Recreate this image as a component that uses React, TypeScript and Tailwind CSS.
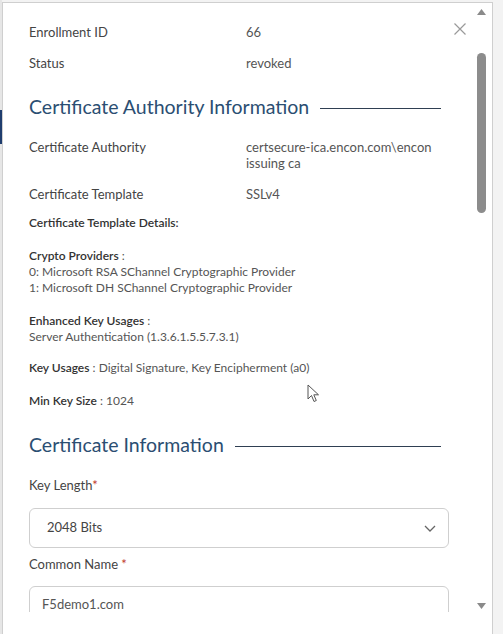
import React from 'react';

const font = { fontFamily: 'Lato, "Open Sans", sans-serif' };

const Row = ({ label, children, className = '' }: { label: string; children: React.ReactNode; className?: string }) => (
  <div className={`flex text-[13px] leading-[16px] ${className}`}>
    <div className="w-[217px] shrink-0 text-[#444]">{label}</div>
    <div className="text-[#555]">{children}</div>
  </div>
);

const Heading = ({ title, className = '' }: { title: string; className?: string }) => (
  <div className={`flex items-center gap-[11px] w-[412px] ${className}`}>
    <h2 className="text-[19.5px] leading-[28px] text-[#2b4e72] whitespace-nowrap">{title}</h2>
    <div className="flex-1 h-[1.5px] bg-[#2f3f52] mt-[3px]" />
  </div>
);

const Detail = ({ label, children, className = '' }: { label: string; children?: React.ReactNode; className?: string }) => (
  <div className={`text-[12px] leading-[16px] text-[#555] ${className}`}>
    <span className="font-semibold text-[#333]">{label}</span>
    {children}
  </div>
);

export default function App() {
  return (
    <div className="w-[503px] h-[634px] bg-[#f3f3f3] flex overflow-hidden" style={font}>
      <div className="w-[2px] shrink-0 flex flex-col">
        <div className="h-[110px] bg-[#e6e6e6]" />
        <div className="h-[34px] bg-[#1f3d6e]" />
        <div className="flex-1 bg-[#e6e6e6]" />
      </div>
      <div className="w-[491px] shrink-0 bg-white border-l border-t border-r border-[#cfcfcf] mt-[2px] flex relative">
        <button className="absolute left-[450px] top-[19px] text-[#9a9a9a]">
          <svg width="14" height="14" viewBox="0 0 14 14" fill="none" stroke="currentColor" strokeWidth="1.2">
            <path d="M1.5 1.5 L12.5 12.5 M12.5 1.5 L1.5 12.5" />
          </svg>
        </button>
        <div className="flex-1 h-[609px] overflow-hidden pl-[26px] pt-[19px] relative">
          <Row label="Enrollment ID" className="leading-[20px]">66</Row>
          <Row label="Status" className="mt-[11px] leading-[20px]">revoked</Row>

          <Heading title="Certificate Authority Information" className="mt-[20px]" />

          <Row label="Certificate Authority" className="mt-[18px]">
            <div className="w-[190px]">certsecure-ica.encon.com\encon issuing ca</div>
          </Row>
          <Row label="Certificate Template" className="mt-[15px]">SSLv4</Row>

          <Detail label="Certificate Template Details:" className="mt-[13px]" />

          <Detail label="Crypto Providers" className="mt-[17px]">
            {' :'}
            <div>0: Microsoft RSA SChannel Cryptographic Provider</div>
            <div>1: Microsoft DH SChannel Cryptographic Provider</div>
          </Detail>

          <Detail label="Enhanced Key Usages" className="mt-[17px]">
            {' :'}
            <div>Server Authentication (1.3.6.1.5.5.7.3.1)</div>
          </Detail>

          <Detail label="Key Usages" className="mt-[15px]">
            {' : Digital Signature, Key Encipherment (a0)'}
          </Detail>

          <Detail label="Min Key Size" className="mt-[17px]">
            {' : 1024'}
          </Detail>

          <Heading title="Certificate Information" className="mt-[22px]" />

          <div className="mt-[18px] text-[13px] leading-[16px] text-[#444]">
            Key Length<span className="text-[#c0392b]">*</span>
          </div>
          <div className="mt-[15px] w-[420px] h-[40px] border border-[#cfcfcf] rounded-[6px] flex items-center justify-between pl-[17px] pr-[11px] text-[13px] text-[#444]">
            <span>2048 Bits</span>
            <svg width="14" height="14" viewBox="0 0 14 14" fill="none" stroke="#666" strokeWidth="1.3">
              <path d="M2 5 L7 10 L12 5" />
            </svg>
          </div>

          <div className="mt-[8px] text-[13px] leading-[16px] text-[#444]">
            Common Name <span className="text-[#c0392b]">*</span>
          </div>
          <div className="mt-[14px] w-[420px] h-[40px] border border-[#cfcfcf] rounded-[6px] flex items-start pl-[12px] pt-[10px] text-[13px] leading-[14px] text-[#555]">
            F5demo1.com
          </div>

          <svg className="absolute left-[304px] top-[381px]" width="14" height="20" viewBox="0 0 14 20">
            <path d="M1 1 L1 15 L4.5 11.5 L7 17.5 L9.3 16.5 L6.8 10.8 L11.5 10.8 Z" fill="white" stroke="#555" strokeWidth="1" strokeLinejoin="round" />
          </svg>
        </div>
        <div className="w-[17px] shrink-0 flex flex-col items-center pt-[6px] mr-[2px]">
          <svg width="9" height="6" viewBox="0 0 9 6">
            <path d="M0 6 L4.5 0 L9 6 Z" fill="#8a8a8a" />
          </svg>
          <div className="mt-[38px] w-[9px] h-[160px] rounded-full bg-[#8c8c8c]" />
          <div className="flex-1" />
          <svg width="9" height="6" viewBox="0 0 9 6" className="mb-[25px]">
            <path d="M0 0 L9 0 L4.5 6 Z" fill="#8a8a8a" />
          </svg>
        </div>
      </div>
    </div>
  );
}
